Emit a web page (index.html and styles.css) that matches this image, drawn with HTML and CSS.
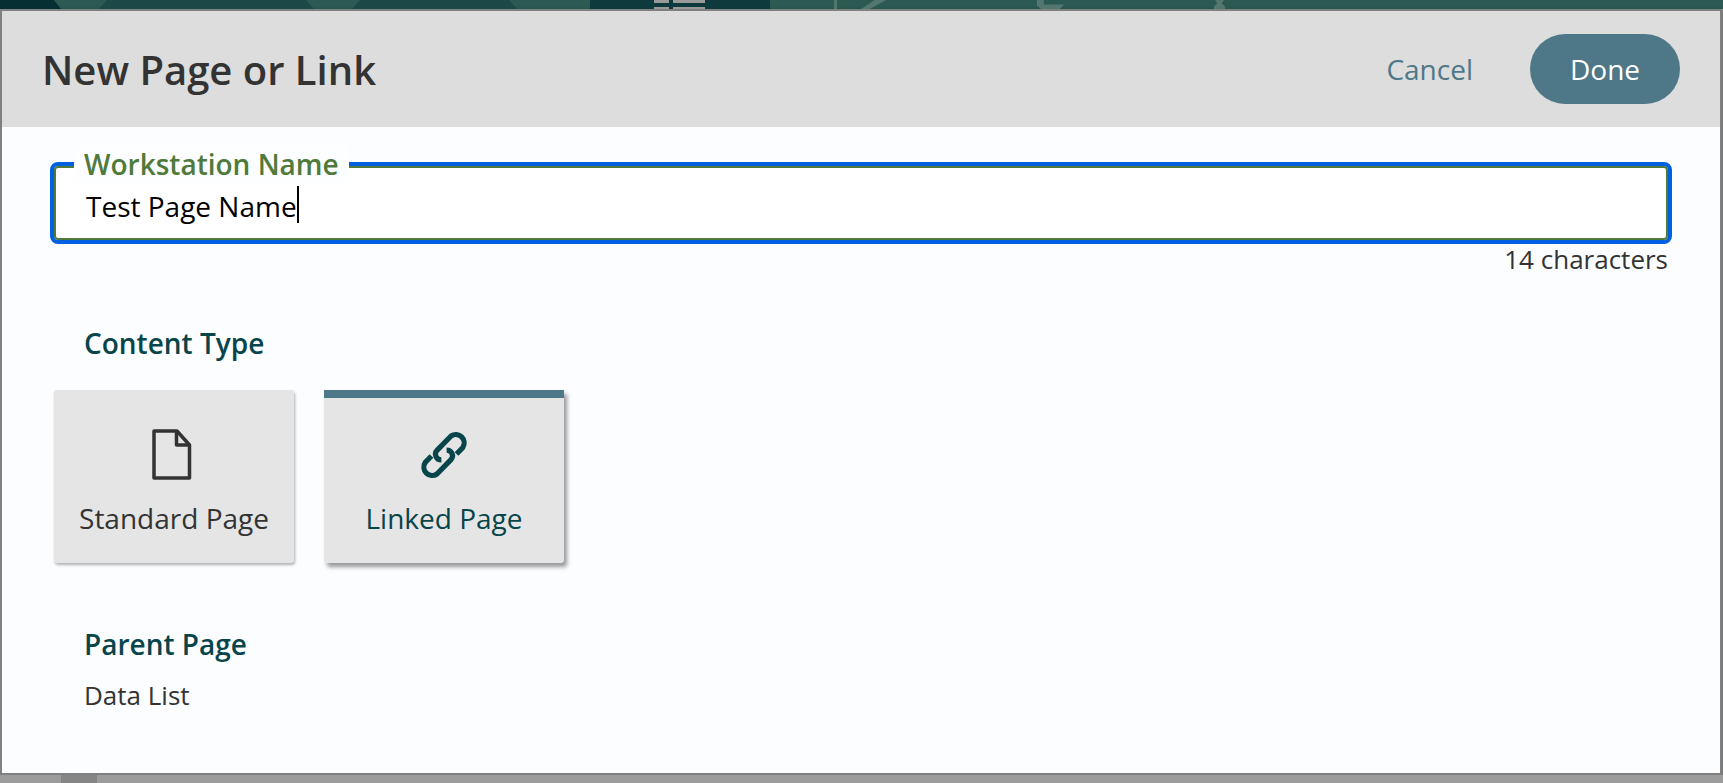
FILE: index.html
```html
<!DOCTYPE html>
<html lang="en">
<head>
<meta charset="utf-8">
<title>New Page or Link</title>
<link rel="stylesheet" href="styles.css">
</head>
<body>
<div class="topstrip">
  <div class="seg seg-a"></div>
  <div class="seg seg-b"></div>
  <div class="seg seg-c"></div>
  <div class="seg seg-d"><span class="bar bar-s"></span><span class="bar bar-l"></span></div>
  <span class="mark mark-a"></span>
  <span class="mark mark-b"></span>
  <span class="mark mark-c"></span>
  <span class="mark mark-d"></span>
</div>
<section class="modal">
  <header class="modal-head">
    <h1 class="modal-title">New Page or Link</h1>
    <div class="modal-actions">
      <span class="cancel">Cancel</span>
      <span class="done">Done</span>
    </div>
  </header>
  <div class="modal-body">
    <fieldset class="field">
      <legend class="field-label">Workstation Name</legend>
      <div class="field-value"><span>Test Page Name</span><i class="caret"></i></div>
    </fieldset>
    <div class="counter">14 characters</div>
    <h2 class="section-title type-title">Content Type</h2>
    <div class="cards">
      <div class="card">
        <svg class="icon icon-page" width="44" height="51" viewBox="0 0 44 51" aria-hidden="true">
          <path d="M2 2H25L37.500 16V49H2Z" fill="none" stroke="#333" stroke-width="3.500" stroke-linejoin="round"/>
          <path d="M24.500 2V16H37.500" fill="none" stroke="#333" stroke-width="3.500" stroke-linejoin="round"/>
        </svg>
        <span class="card-label">Standard Page</span>
      </div>
      <div class="card card-active">
        <svg class="icon icon-link" width="48" height="48" viewBox="1 1 46 46" aria-hidden="true">
          <path d="M36 23L42 16.800A8 8 0 0 0 30.800 5.800L17.300 19.500A5.500 5.500 0 0 0 21.500 28.700" fill="none" stroke="#08454b" stroke-width="5"/>
          <path d="M12 25L6 31.200A8 8 0 0 0 17.200 42.200L30.700 28.500A5.500 5.500 0 0 0 26.500 19.300" fill="none" stroke="#08454b" stroke-width="5"/>
        </svg>
        <span class="card-label">Linked Page</span>
      </div>
    </div>
    <h2 class="section-title parent-title">Parent Page</h2>
    <p class="parent-value">Data List</p>
  </div>
</section>
<div class="bottomstrip"><div class="bottom-block"></div></div>
</body>
</html>
```
FILE: styles.css
```css
* { box-sizing: border-box; }
html, body { margin: 0; height: 100%; }
body {
  width: 1723px;
  height: 783px;
  overflow: hidden;
  background: #9c9c9c;
  font-family: "Open Sans", "Noto Sans", sans-serif;
  color: #333;
}
.topstrip { display: flex; height: 9px; background: #2a5a51; }
.seg { flex: none; height: 9px; }
.seg-a { width: 61px; background: #062f33; clip-path: polygon(0 0, 54px 0, 100% 100%, 0 100%); }
.seg-b { width: 215px; margin-left: 38px; background: #1c4847; clip-path: polygon(8px 0, 207px 0, 100% 100%, 0 100%); }
.seg-c { width: 165px; margin-left: 38px; background: #1c4847; clip-path: polygon(8px 0, 157px 0, 100% 100%, 0 100%); }
.seg-d { display: flex; gap: 4px; width: 180px; margin-left: 73px; padding-left: 64px; background: #0f3a3d; }
.bar { display: block; height: 9px; background: linear-gradient(#9a9a9a 0 3px, transparent 3px 7px, #9a9a9a 7px); }
.bar-s { width: 15px; }
.bar-l { width: 32px; }
.mark { display: block; height: 9px; background: #53776f; }
.mark-a { width: 3px; margin-left: 64px; }
.mark-b { width: 25px; margin-left: 24px; clip-path: polygon(55% 0, 100% 0, 35% 100%, 0 100%); }
.mark-c { width: 27px; margin-left: 151px; clip-path: polygon(0 0, 25% 0, 25% 50%, 100% 50%, 85% 100%, 15% 100%, 0 60%); }
.mark-d { width: 11px; margin-left: 150px; clip-path: polygon(10% 0, 90% 0, 70% 40%, 100% 70%, 100% 100%, 0 100%, 0 70%, 30% 40%); }
.modal {
  display: flex;
  flex-direction: column;
  width: 1722px;
  height: 766px;
  border: 2px solid #808080;
  background: #fcfdff;
  box-shadow: 1px 2px 4px rgba(0, 0, 0, .4);
}
.modal-head {
  display: flex;
  align-items: center;
  justify-content: space-between;
  flex: none;
  height: 116px;
  padding: 0 40px;
  background: #ddd;
}
.modal-title { margin: 1px 0 0; font-size: 40px; font-weight: 600; line-height: 54px; color: #333; }
.modal-actions { display: flex; align-items: center; gap: 57px; }
.cancel { font-size: 28px; color: #4e7787; }
.done {
  display: flex;
  align-items: center;
  justify-content: center;
  width: 150px;
  height: 70px;
  border-radius: 35px;
  background: #4e7787;
  color: #fff;
  font-size: 28px;
}
.modal-body { flex: 1; padding: 0 0 0 48px; }
.field {
  display: block;
  width: 1622px;
  height: 98px;
  margin: 19px 0 0;
  padding: 0;
  border: 4px solid #0060df;
  border-radius: 8px;
  background: #fff;
  box-shadow: inset 0 0 0 2px #4f7a3a;
}
.field-label {
  margin-left: 20px;
  padding: 0 10px;
  background: #fdfeff;
  font-size: 28px;
  font-weight: 600;
  line-height: 36px;
  color: #4f7a3a;
}
.field-value { display: flex; align-items: center; height: 44px; margin: 2px 0 0 32px; font-size: 28px; color: #000; }
.caret { display: block; width: 2px; height: 37px; margin: -3px 0 0; background: #000; }
.counter { width: 1618px; text-align: right; font-size: 26px; line-height: 30px; color: #333; }
.section-title { margin: 0; font-size: 28px; font-weight: 600; line-height: 38px; color: #08454b; }
.type-title { margin: 50px 0 0 34px; }
.cards { display: flex; gap: 30px; margin: 28px 0 0 4px; }
.card {
  display: flex;
  flex-direction: column;
  align-items: center;
  width: 240px;
  height: 173px;
  padding-top: 39px;
  border-radius: 3px;
  background: #e5e5e5;
  box-shadow: 1px 2px 3px rgba(0, 0, 0, .3);
}
.icon { display: block; flex: none; }
.icon-link { margin: 2px 0 1px; }
.card-label { margin-top: 19px; font-size: 28px; line-height: 38px; color: #333; }
.card-active {
  padding-top: 31px;
  border-top: 8px solid #4e7787;
  border-radius: 0 0 3px 3px;
  box-shadow: 3px 4px 4px rgba(0, 0, 0, .4);
}
.card-active .card-label { color: #08454b; }
.parent-title { margin: 62px 0 0 34px; }
.parent-value { margin: 14px 0 0 34px; font-size: 26px; line-height: 36px; color: #333; }
.bottomstrip { display: flex; height: 8px; padding-left: 61px; background: #9c9c9c; }
.bottom-block { width: 36px; background: #858585; }
```
